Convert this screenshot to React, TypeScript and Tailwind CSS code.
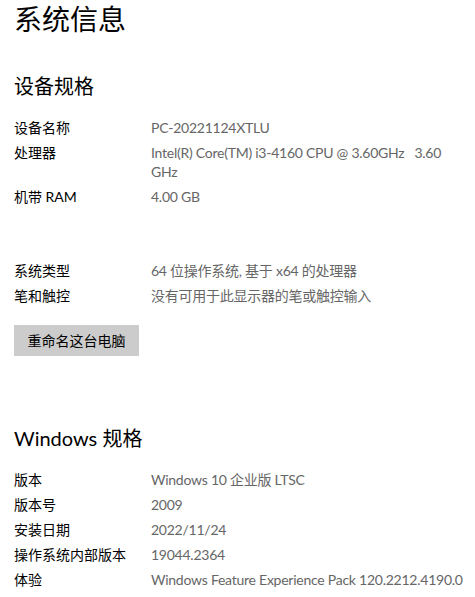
import React from "react";

type Row = { label: string; value: React.ReactNode };

const deviceRows: Row[] = [
  { label: "设备名称", value: "PC-20221124XTLU" },
  {
    label: "处理器",
    value: (
      <>
        Intel(R) Core(TM) i3-4160 CPU @ 3.60GHz&nbsp;&nbsp;&nbsp;3.60
        <br />
        GHz
      </>
    ),
  },
  { label: "机带 RAM", value: "4.00 GB" },
];

const systemRows: Row[] = [
  { label: "系统类型", value: "64 位操作系统, 基于 x64 的处理器" },
  { label: "笔和触控", value: "没有可用于此显示器的笔或触控输入" },
];

const windowsRows: Row[] = [
  { label: "版本", value: "Windows 10 企业版 LTSC" },
  { label: "版本号", value: "2009" },
  { label: "安装日期", value: "2022/11/24" },
  { label: "操作系统内部版本", value: "19044.2364" },
  { label: "体验", value: "Windows Feature Experience Pack 120.2212.4190.0" },
];

function InfoRows({ rows }: { rows: Row[] }) {
  return (
    <div className="flex flex-col gap-[6px]">
      {rows.map((r) => (
        <div key={r.label} className="flex text-[14px] leading-[19px]">
          <div className="w-[137px] shrink-0 text-black">{r.label}</div>
          <div className="text-[#666666] whitespace-nowrap tracking-[-0.25px]">{r.value}</div>
        </div>
      ))}
    </div>
  );
}

export default function App() {
  return (
    <div
      className="w-[475px] h-[597px] overflow-hidden bg-white px-[14px]"
      style={{ fontFamily: 'Lato, "Noto Sans CJK SC", sans-serif' }}
    >
      <h1 className="text-[28px] leading-[38px] text-black">系统信息</h1>

      <h2 className="mt-[34px] text-[20px] leading-[28px] text-black">设备规格</h2>
      <div className="mt-[18px]">
        <InfoRows rows={deviceRows} />
      </div>
      <div className="mt-[55px]">
        <InfoRows rows={systemRows} />
      </div>

      <button className="mt-[20px] h-[31px] w-[125px] bg-[#cccccc] text-[14px] text-black">
        重命名这台电脑
      </button>

      <h2 className="mt-[68px] text-[20px] leading-[28px] text-black">Windows 规格</h2>
      <div className="mt-[18px]">
        <InfoRows rows={windowsRows} />
      </div>
    </div>
  );
}
